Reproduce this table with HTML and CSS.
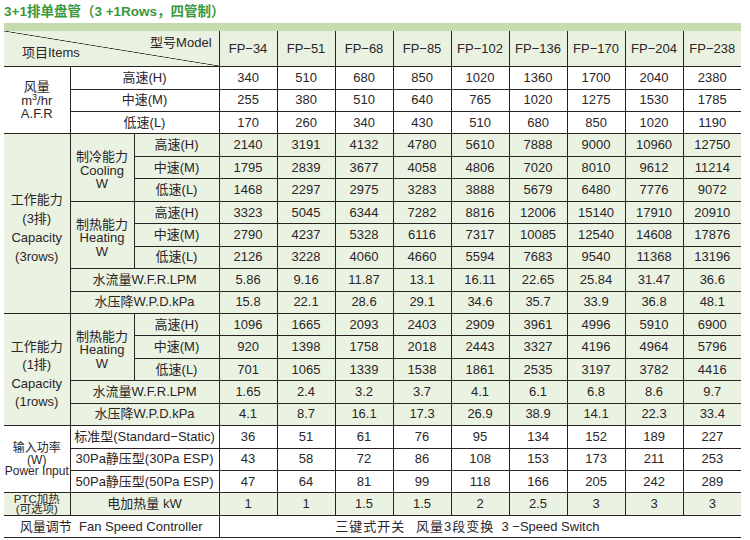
FILE: index.html
```html
<!DOCTYPE html>
<html lang="zh">
<head>
<meta charset="utf-8">
<title>3+1排单盘管</title>
<link rel="stylesheet" href="styles.css">
</head>
<body>
<h1 class="title">3+1排单盘管（3 +1Rows，四管制）</h1>
<div class="wrap">
  <div class="band"></div>
  <table class="spec">
    <colgroup>
      <col class="c1"><col class="c2"><col class="c3">
      <col class="cd"><col class="cd"><col class="cd"><col class="cd"><col class="cd"><col class="cd"><col class="cd"><col class="cd"><col class="cd">
    </colgroup>
    <tr class="head">
      <td colspan="3" class="diag"><div class="m">型号Model</div><div class="i">项目Items</div></td>
      <td>FP−34</td><td>FP−51</td><td>FP−68</td><td>FP−85</td><td>FP−102</td><td>FP−136</td><td>FP−170</td><td>FP−204</td><td>FP−238</td>
    </tr>
    <tr class="w">
      <td rowspan="3" class="lb afr">风量<br>m<sup>3</sup>/hr<br>A.F.R</td>
      <td colspan="2">高速(H)</td>
      <td>340</td><td>510</td><td>680</td><td>850</td><td>1020</td><td>1360</td><td>1700</td><td>2040</td><td>2380</td>
    </tr>
    <tr class="w">
      <td colspan="2">中速(M)</td>
      <td>255</td><td>380</td><td>510</td><td>640</td><td>765</td><td>1020</td><td>1275</td><td>1530</td><td>1785</td>
    </tr>
    <tr class="w">
      <td colspan="2">低速(L)</td>
      <td>170</td><td>260</td><td>340</td><td>430</td><td>510</td><td>680</td><td>850</td><td>1020</td><td>1190</td>
    </tr>
    <tr class="g">
      <td rowspan="8" class="lb cap">工作能力<br>(3排)<br>Capacity<br>(3rows)</td>
      <td rowspan="3" class="lb sub">制冷能力<br>Cooling<br>W</td>
      <td>高速(H)</td>
      <td>2140</td><td>3191</td><td>4132</td><td>4780</td><td>5610</td><td>7888</td><td>9000</td><td>10960</td><td>12750</td>
    </tr>
    <tr class="g">
      <td>中速(M)</td>
      <td>1795</td><td>2839</td><td>3677</td><td>4058</td><td>4806</td><td>7020</td><td>8010</td><td>9612</td><td>11214</td>
    </tr>
    <tr class="g">
      <td>低速(L)</td>
      <td>1468</td><td>2297</td><td>2975</td><td>3283</td><td>3888</td><td>5679</td><td>6480</td><td>7776</td><td>9072</td>
    </tr>
    <tr class="g">
      <td rowspan="3" class="lb sub">制热能力<br>Heating<br>W</td>
      <td>高速(H)</td>
      <td>3323</td><td>5045</td><td>6344</td><td>7282</td><td>8816</td><td>12006</td><td>15140</td><td>17910</td><td>20910</td>
    </tr>
    <tr class="g">
      <td>中速(M)</td>
      <td>2790</td><td>4237</td><td>5328</td><td>6116</td><td>7317</td><td>10085</td><td>12540</td><td>14608</td><td>17876</td>
    </tr>
    <tr class="g">
      <td>低速(L)</td>
      <td>2126</td><td>3228</td><td>4060</td><td>4660</td><td>5594</td><td>7683</td><td>9540</td><td>11368</td><td>13196</td>
    </tr>
    <tr class="g">
      <td colspan="2">水流量W.F.R.LPM</td>
      <td>5.86</td><td>9.16</td><td>11.87</td><td>13.1</td><td>16.11</td><td>22.65</td><td>25.84</td><td>31.47</td><td>36.6</td>
    </tr>
    <tr class="g">
      <td colspan="2">水压降W.P.D.kPa</td>
      <td>15.8</td><td>22.1</td><td>28.6</td><td>29.1</td><td>34.6</td><td>35.7</td><td>33.9</td><td>36.8</td><td>48.1</td>
    </tr>
    <tr class="g">
      <td rowspan="5" class="lb cap1">工作能力<br>(1排)<br>Capacity<br>(1rows)</td>
      <td rowspan="3" class="lb sub">制热能力<br>Heating<br>W</td>
      <td>高速(H)</td>
      <td>1096</td><td>1665</td><td>2093</td><td>2403</td><td>2909</td><td>3961</td><td>4996</td><td>5910</td><td>6900</td>
    </tr>
    <tr class="g">
      <td>中速(M)</td>
      <td>920</td><td>1398</td><td>1758</td><td>2018</td><td>2443</td><td>3327</td><td>4196</td><td>4964</td><td>5796</td>
    </tr>
    <tr class="g">
      <td>低速(L)</td>
      <td>701</td><td>1065</td><td>1339</td><td>1538</td><td>1861</td><td>2535</td><td>3197</td><td>3782</td><td>4416</td>
    </tr>
    <tr class="g">
      <td colspan="2">水流量W.F.R.LPM</td>
      <td>1.65</td><td>2.4</td><td>3.2</td><td>3.7</td><td>4.1</td><td>6.1</td><td>6.8</td><td>8.6</td><td>9.7</td>
    </tr>
    <tr class="g">
      <td colspan="2">水压降W.P.D.kPa</td>
      <td>4.1</td><td>8.7</td><td>16.1</td><td>17.3</td><td>26.9</td><td>38.9</td><td>14.1</td><td>22.3</td><td>33.4</td>
    </tr>
    <tr class="w">
      <td rowspan="3" class="lb pw">输入功率<br>(W)<br>Power Input</td>
      <td colspan="2">标准型(Standard−Static)</td>
      <td>36</td><td>51</td><td>61</td><td>76</td><td>95</td><td>134</td><td>152</td><td>189</td><td>227</td>
    </tr>
    <tr class="w">
      <td colspan="2">30Pa静压型(30Pa ESP)</td>
      <td>43</td><td>58</td><td>72</td><td>86</td><td>108</td><td>153</td><td>173</td><td>211</td><td>253</td>
    </tr>
    <tr class="w">
      <td colspan="2">50Pa静压型(50Pa ESP)</td>
      <td>47</td><td>64</td><td>81</td><td>99</td><td>118</td><td>166</td><td>205</td><td>242</td><td>289</td>
    </tr>
    <tr class="g">
      <td class="lb ptc">PTC加热<br>(可选项)</td>
      <td colspan="2">电加热量 kW</td>
      <td>1</td><td>1</td><td>1.5</td><td>1.5</td><td>2</td><td>2.5</td><td>3</td><td>3</td><td>3</td>
    </tr>
    <tr class="w">
      <td colspan="3">风量调节&nbsp; Fan Speed Controller</td>
      <td colspan="9" class="sw"><span class="cj">三键式开关</span>&nbsp;&nbsp; <span class="cj">风量3段变换</span>&nbsp; 3 −Speed Switch</td>
    </tr>
  </table>
</div>
</body>
</html>
```

FILE: styles.css
```css
html, body {
  margin: 0;
  padding: 0;
  background: #ffffff;
}

body {
  font-family: "Liberation Sans", "Noto Sans CJK SC", sans-serif;
  color: #2b2529;
}

.title {
  margin: 0;
  padding: 4px 0 0 4px;
  height: 19px;
  font-size: 13.5px;
  line-height: 15px;
  font-weight: bold;
  color: #3a983c;
}

.wrap {
  margin-left: 4px;
  width: 737px;
}

.band {
  height: 8px;
  background: #c4dcac;
}

.spec {
  width: 737px;
  table-layout: fixed;
  border-collapse: collapse;
  border-top: hidden;
  border-left: hidden;
  border-right: hidden;
  font-size: 13px;
}

.c1 { width: 66px; }
.c2 { width: 64px; }
.c3 { width: 85px; }
.cd { width: 58px; }

.spec td {
  border: 1px solid #2a2222;
  padding: 0;
  text-align: center;
  vertical-align: middle;
  line-height: 14px;
  white-space: nowrap;
}

.spec tr {
  height: 22.45px;
}

.spec tr.head {
  height: 35.67px;
  background: #e9f2e0;
}

.spec tr.w { background: #ffffff; }
.spec tr.g { background: #eaf3e1; }

.spec td.diag {
  vertical-align: top;
  background: linear-gradient(to top right, transparent calc(50% - 0.7px), #2a2222 50%, transparent calc(50% + 0.7px));
}

.diag .m {
  text-align: right;
  padding: 5px 7px 0 0;
}

.diag .i {
  text-align: left;
  padding-left: 18px;
  margin-top: -4px;
}

.lb { white-space: normal; }

.spec td.afr { line-height: 13.5px; }
.afr sup { font-size: 9px; line-height: 0; vertical-align: 5px; }

.spec td.cap { line-height: 19px; padding-top: 8px; }
.spec td.cap1 { line-height: 18.5px; padding-top: 10px; }

.spec td.sub { line-height: 13.5px; padding-top: 6px; }

.spec td.pw { font-size: 12px; line-height: 11.5px; padding-top: 2px; }
.spec td.ptc { font-size: 11.5px; line-height: 10.5px; }

.spec td.sw { padding-right: 26px; }
.sw .cj { letter-spacing: 1px; }
```
